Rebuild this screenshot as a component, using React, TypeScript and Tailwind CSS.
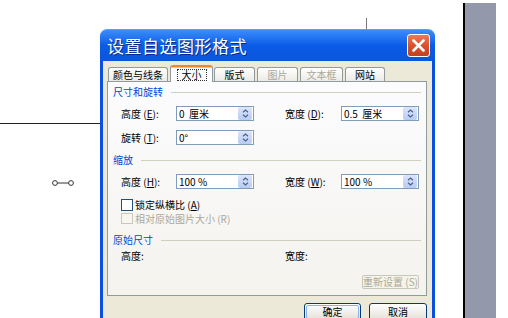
import React from "react";

const Spin = () => (
  <div className="ml-auto mr-[1px] w-[14px] h-[13px] rounded-[2px] bg-linear-to-b from-[#dbe5fb] to-[#b8cbf5] flex items-center justify-center">
    <svg width="7" height="9" viewBox="0 0 7 9">
      <path d="M1 3.2 L3.5 1 L6 3.2" fill="none" stroke="#4d6185" strokeWidth="1.2" />
      <path d="M1 5.8 L3.5 8 L6 5.8" fill="none" stroke="#4d6185" strokeWidth="1.2" />
    </svg>
  </div>
);

const Field = ({ value }: { value: string }) => (
  <div className="w-[78px] h-[15px] bg-white border border-[#7f9db9] flex items-center pl-[2px]">
    <span className="text-[10px] leading-none text-black whitespace-pre">{value}</span>
    <Spin />
  </div>
);

const Label = ({ children, w }: { children: React.ReactNode; w: string }) => (
  <div className={`${w} text-[10px] leading-none text-black whitespace-pre`}>{children}</div>
);

const Header = ({ text }: { text: string }) => (
  <div className="h-[14px] flex items-center pl-[5px] pr-[5px]">
    <span className="text-[10px] leading-none text-[#0046d5] whitespace-nowrap">{text}</span>
    <div className="flex-1 ml-[8px] h-px bg-[#d0d0bf]" />
  </div>
);

const Tab = ({
  text,
  w,
  ml,
  disabled,
}: {
  text: string;
  w: string;
  ml: string;
  disabled?: boolean;
}) => (
  <div
    className={`${w} ${ml} h-[14px] border border-b-0 border-[#919b9c] rounded-t-[3px] bg-linear-to-b from-[#ffffff] to-[#ecebe6] flex items-center justify-center text-[10px] leading-none ${
      disabled ? "text-[#aca899]" : "text-black"
    }`}
  >
    {text}
  </div>
);

export default function App() {
  return (
    <div className="relative w-[508px] h-[318px] bg-white overflow-hidden font-['Noto_Sans_CJK_SC','Noto_Sans',sans-serif]">
      {/* right gray strip */}
      <div className="absolute left-[463px] top-[3px] w-[33px] h-[315px] border-l-[2px] border-black bg-[#9398ab]" />
      {/* canvas lines */}
      <div className="absolute left-0 top-[123px] w-[100px] h-px bg-[#222]" />
      <div className="absolute left-[366px] top-[18px] w-px h-[11px] bg-[#777]" />
      <svg className="absolute left-[51px] top-[179px]" width="24" height="8" viewBox="0 0 24 8">
        <circle cx="4" cy="4" r="2.4" fill="white" stroke="#333" strokeWidth="1" />
        <circle cx="20" cy="4" r="2.4" fill="white" stroke="#333" strokeWidth="1" />
        <line x1="6.4" y1="4" x2="17.6" y2="4" stroke="#333" strokeWidth="1" />
      </svg>

      {/* dialog */}
      <div className="absolute left-[100px] top-[29px] w-[335px] h-[300px] flex flex-col">
        <div className="h-[32px] rounded-t-[7px] bg-linear-to-b from-[#3b8dfb] via-[#0b5be6] to-[#0a55dc] flex items-center pl-[7px] pr-[5px] border-t border-[#5aa0ff]">
          <span className="text-white text-[17px] leading-none tracking-[0.5px] [text-shadow:1px_1px_0_#0a2a8a]">
            设置自选图形格式
          </span>
          <div className="ml-auto w-[23px] h-[23px] rounded-[3px] border border-white bg-linear-to-b from-[#eb7a55] via-[#d9532c] to-[#c2401d] flex items-center justify-center">
            <svg width="13" height="13" viewBox="0 0 13 13">
              <path d="M1.5 1.5 L11.5 11.5 M11.5 1.5 L1.5 11.5" stroke="white" strokeWidth="2.6" strokeLinecap="round" />
            </svg>
          </div>
        </div>
        <div className="flex-1 bg-[#ece9d8] border-x-[3px] border-[#0a4fe0] pt-[4px] pl-[4px] pr-[5px] flex flex-col">
          {/* tabs */}
          <div className="flex items-end h-[16px] relative z-10">
            <Tab text="颜色与线条" w="w-[60px]" ml="ml-[1px]" />
            <div className="ml-[2px] w-[43px] h-[17px] -mb-px border-x border-[#919b9c] rounded-t-[3px] bg-[#fcfcfe] flex flex-col">
              <div className="h-[2px] rounded-t-[2px] bg-[#e68b2c]" />
              <div className="h-px bg-[#ffc73c]" />
              <div className="flex-1 flex items-center justify-center">
                <span className="px-[4px] h-[12px] border border-dotted border-[#333] flex items-center text-[10px] leading-none text-black">
                  大小
                </span>
              </div>
            </div>
            <Tab text="版式" w="w-[41px]" ml="ml-[1px]" />
            <Tab text="图片" w="w-[41px]" ml="ml-[2px]" disabled />
            <Tab text="文本框" w="w-[43px]" ml="ml-[2px]" disabled />
            <Tab text="网站" w="w-[40px]" ml="ml-[2px]" />
          </div>
          {/* panel */}
          <div className="w-[320px] h-[215px] border border-[#919b9c] bg-linear-to-b from-[#fcfcfe] to-[#f4f3ee] flex flex-col">
            <div className="mt-[3px]">
              <Header text="尺寸和旋转" />
            </div>
            <div className="mt-[7px] flex items-center pl-[13px]">
              <Label w="w-[55px]">
                高度 (<u>E</u>):
              </Label>
              <Field value="0  厘米" />
              <div className="w-[31px]" />
              <Label w="w-[56px]">
                宽度 (<u>D</u>):
              </Label>
              <Field value="0.5  厘米" />
            </div>
            <div className="mt-[9px] flex items-center pl-[13px]">
              <Label w="w-[55px]">
                旋转 (<u>T</u>):
              </Label>
              <Field value="0°" />
            </div>
            <div className="mt-[8px]">
              <Header text="缩放" />
            </div>
            <div className="mt-[7px] flex items-center pl-[13px]">
              <Label w="w-[55px]">
                高度 (<u>H</u>):
              </Label>
              <Field value="100 %" />
              <div className="w-[31px]" />
              <Label w="w-[56px]">
                宽度 (<u>W</u>):
              </Label>
              <Field value="100 %" />
            </div>
            <div className="mt-[9px] h-[14px] flex items-center pl-[13px]">
              <div className="w-[12px] h-[12px] border border-[#1c5180] bg-white" />
              <span className="ml-[2px] text-[10px] leading-none text-black whitespace-pre">
                锁定纵横比 (<u>A</u>)
              </span>
            </div>
            <div className="h-[13px] flex items-center pl-[13px]">
              <div className="w-[12px] h-[11px] border border-[#cac8bb] bg-[#f7f6f0]" />
              <span className="ml-[2px] text-[10px] leading-none text-[#aca899] whitespace-pre">相对原始图片大小 (R)</span>
            </div>
            <div className="mt-[8px]">
              <Header text="原始尺寸" />
            </div>
            <div className="mt-[2px] h-[14px] flex items-center pl-[13px]">
              <Label w="w-[164px]">高度:</Label>
              <Label w="w-[56px]">宽度:</Label>
            </div>
            <div className="mt-[12px] flex justify-end pr-[7px]">
              <div className="w-[57px] h-[14px] border border-[#c9c7ba] rounded-[2px] bg-[#f5f4ea] flex items-center justify-center text-[10px] leading-none text-[#aca899] whitespace-pre">
                重新设置 (S)
              </div>
            </div>
          </div>
          {/* buttons */}
          <div className="mt-[7px] flex justify-end gap-[8px] w-[320px]">
            <div className="w-[57px] h-[18px] border border-[#003c74] rounded-[3px] bg-linear-to-b from-[#ffffff] to-[#e3e0d4] p-px">
              <div className="w-full h-full border border-[#8fb0ec] rounded-[2px] flex items-center justify-center text-[10px] leading-none text-black">
                确定
              </div>
            </div>
            <div className="w-[58px] h-[18px] border border-[#003c74] rounded-[3px] bg-linear-to-b from-[#ffffff] to-[#e3e0d4] flex items-center justify-center text-[10px] leading-none text-black">
              取消
            </div>
          </div>
        </div>
      </div>
    </div>
  );
}
